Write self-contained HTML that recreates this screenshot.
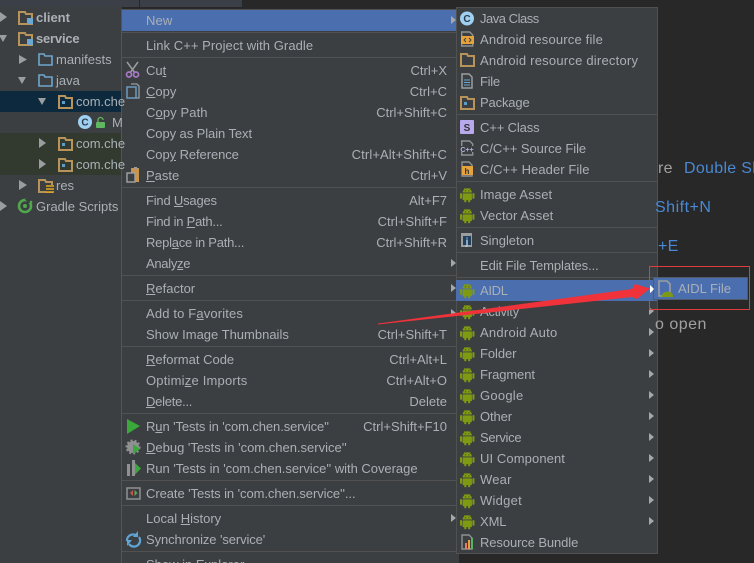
<!DOCTYPE html>
<html><head><meta charset="utf-8"><style>
html,body{margin:0;padding:0;background:#2a2a2a}
#p{position:relative;width:754px;height:563px;overflow:hidden;background:#282828;font-family:"Liberation Sans",sans-serif;font-size:13px;letter-spacing:0;color:#a9b0b6}
#p div{position:absolute;white-space:nowrap;line-height:20px;height:20px;margin-top:1px}
svg{position:absolute;left:0;top:0}
.k{text-align:right;right:307px}
.m{left:146px}.s{left:480px}
.e{font-size:16px;letter-spacing:.3px;color:#4a88d4;line-height:22px!important;height:22px!important}
b{font-weight:bold;color:#aab0b6}
</style></head><body><div id="p">
<svg width="754" height="563" viewBox="0 0 754 563">
<defs>
<g id="a" transform="scale(.85)"><path d="M3 6.500a5.500 5 0 0 1 11 0z" fill="#7e9a12"/><path d="M5 1.500l1 2M12 1.500l-1 2" stroke="#7e9a12"/><rect x="3" y="7.500" width="11" height="8" rx="1" fill="#7e9a12"/><rect x="0" y="7" width="2.400" height="7" rx="1.200" fill="#7e9a12"/><rect x="14.600" y="7" width="2.400" height="7" rx="1.200" fill="#7e9a12"/><rect x="5" y="14" width="2.500" height="4" rx="1" fill="#7e9a12"/><rect x="9.500" y="14" width="2.500" height="4" rx="1" fill="#7e9a12"/><rect x="6" y="4" width="1" height="1" fill="#333"/><rect x="10" y="4" width="1" height="1" fill="#333"/></g>
<g id="r"><path d="M0 0l5 4-5 4z" fill="#a4a8ab"/></g>
<g id="f"><path d="M1 3V1h6l1 2h6v10H1z" fill="none" stroke="#b8935a" stroke-width="2"/></g>
<g id="pk"><use href="#f"/><rect x="4" y="6" width="3" height="3" fill="#5d9ec9"/></g>
<g id="bf"><path d="M1 3V1h5l1 2h7v9H1z" fill="none" stroke="#6ea6cd" stroke-width="1.600"/></g>
<g id="c"><circle cx="7" cy="7" r="7" fill="#9fd0f0"/><text x="7" y="10.500" font-family="Liberation Sans" font-size="10" font-weight="bold" text-anchor="middle" fill="#2a3a4a">C</text></g>
</defs>
<rect width="754" height="8" fill="#282828"/>
<rect width="139" height="7" fill="#3b4048"/>
<rect x="140" width="102" height="7" fill="#3b4048"/>
<rect y="7" width="122" height="556" fill="#3c3f41"/>
<rect y="91" width="122" height="21" fill="#0d293e"/>
<rect y="133" width="122" height="42" fill="#323a30"/>
<rect x="121" y="9" width="338" height="560" fill="#3c3f41"/>
<rect x="121" y="9" width="338" height="1" fill="#515151"/>
<rect x="121" y="9" width="1" height="554" fill="#555"/>
<rect x="122" y="10" width="334" height="21" fill="#4b6eaf"/>
<g fill="#515151">
<rect x="122" y="32" width="336" height="1"/><rect x="122" y="57" width="336" height="1"/><rect x="122" y="187" width="336" height="1"/><rect x="122" y="275" width="336" height="1"/><rect x="122" y="300" width="336" height="1"/><rect x="122" y="346" width="336" height="1"/><rect x="122" y="413" width="336" height="1"/><rect x="122" y="480" width="336" height="1"/><rect x="122" y="505" width="336" height="1"/><rect x="122" y="551" width="336" height="1"/>
</g>
<g fill="#9b9ea0">
<path d="M0 12l7 5-7 5zM0 201l7 5-7 5z"/><path d="M-1 35h8l-4 7zM19 55l8 4.500-8 4.500zM18 77h8l-4 7zM38 98h8l-4 7zM39 138l7 5-7 5zM39 159l7 5-7 5zM19 180l8 5-8 5z"/>
</g>
<g transform="translate(18,11)"><use href="#f"/><rect x="9" y="7" width="6" height="6" fill="#6aa7d2"/></g>
<g transform="translate(18,32)"><use href="#f"/><rect x="9" y="7" width="6" height="6" fill="#6aa7d2"/></g>
<use href="#bf" x="38" y="53"/><use href="#bf" x="38" y="74"/>
<use href="#pk" x="58" y="95"/><use href="#pk" x="58" y="137"/><use href="#pk" x="58" y="158"/>
<use href="#c" x="78" y="115"/>
<rect x="96" y="122" width="9" height="6" rx="1" fill="#5fb760"/><path d="M98 122v-2a2.500 2.500 0 0 1 5 0" fill="none" stroke="#5fb760" stroke-width="1.300"/>
<g transform="translate(38,179)"><use href="#f"/><rect x="8" y="6" width="7" height="7" fill="#3c3f41"/><path d="M8 7h8M8 10h8M8 13h8" stroke="#e3a91e" stroke-width="1.500"/></g>
<circle cx="25" cy="206" r="6" fill="none" stroke="#4fa94c" stroke-width="2.600"/><circle cx="25" cy="206" r="2" fill="#4fa94c"/><path d="M25 199h7v4h-4z" fill="#3c3f41"/><circle cx="31" cy="202" r="1.300" fill="#4fa94c"/>
<path d="M127 62l8 11M138 62l-8 11" stroke="#9a9ea1" stroke-width="1.500"/><circle cx="129" cy="74.500" r="2.500" fill="none" stroke="#a679c4" stroke-width="1.700"/><circle cx="136" cy="74.500" r="2.500" fill="none" stroke="#a679c4" stroke-width="1.700"/>
<path d="M131 84h6l2 2v12h-3" fill="none" stroke="#9a9ea1" stroke-width="1.300"/><rect x="127" y="87" width="9" height="11" fill="#3c3f41" stroke="#6a9cc0" stroke-width="1.500"/>
<rect x="131" y="168" width="8" height="14" fill="#c8944e"/><rect x="134" y="167" width="3" height="2" fill="#9a9ea1"/><rect x="127" y="173" width="8" height="9" fill="#3c3f41" stroke="#9a9ea1" stroke-width="1.500"/>
<path d="M127 419l13 7-13 8z" fill="#3aa83b"/>
<circle cx="133" cy="447" r="6" fill="#8e9092"/><circle cx="133" cy="447" r="6.500" fill="none" stroke="#8e9092" stroke-dasharray="2 2" stroke-width="2"/><path d="M133 444l7 5-7 5z" fill="#3aa83b"/>
<path d="M127 464h3v12h-3zM132 460h3v16h-3z" fill="#8e9092"/><path d="M135 463l6 5.500-6 6z" fill="#3aa83b"/>
<rect x="127" y="488" width="13" height="11" fill="none" stroke="#8e9092" stroke-width="1.500"/><path d="M133 490l-3 3 3 3z" fill="#c75450"/><path d="M134.500 490l3 3-3 3z" fill="#5aa85a"/>
<path d="M127 541a6 6 0 0 1 10-5M139 537a6 6 0 0 1-10 7" fill="none" stroke="#5fa5d8" stroke-width="2.200"/><path d="M138 531v6h-5zM127 546v-6h5z" fill="#5fa5d8"/>
<use href="#r" x="451" y="16"/><use href="#r" x="451" y="259"/><use href="#r" x="451" y="284"/><use href="#r" x="451" y="309"/><use href="#r" x="451" y="514"/>
<rect x="456.500" y="7.500" width="201" height="546" fill="#3c3f41" stroke="#515151" stroke-width="1"/>
<rect x="456" y="280" width="201" height="21" fill="#4b6eaf"/>
<g fill="#515151"><rect x="457" y="114" width="200" height="1"/><rect x="457" y="181" width="200" height="1"/><rect x="457" y="227" width="200" height="1"/><rect x="457" y="252" width="200" height="1"/><rect x="457" y="277" width="200" height="1"/></g>
<use href="#c" x="460" y="11.500"/>
<path d="M461.700 32h8l3 3v11h-11z" fill="none" stroke="#8e9092" stroke-width="1.400"/><rect x="461" y="36" width="13" height="8" fill="#e6a23c"/><path d="M466 38l-2 2 2 2M469 38l2 2-2 2" fill="none" stroke="#3c3f41"/>
<use href="#f" x="460" y="53"/>
<path d="M462 74h7l3 3v11h-10z" fill="none" stroke="#9a9ea1" stroke-width="1.500"/><path d="M464 80h6M464 82.500h6M464 85h6" stroke="#6aa7d2"/>
<use href="#pk" x="460" y="96"/>
<rect x="460" y="120" width="14" height="14" rx="1" fill="#b8a8ec"/><text x="467" y="131" font-family="Liberation Sans" font-size="10" font-weight="bold" text-anchor="middle" fill="#333">S</text>
<path d="M461.700 141h8l3 3v11h-11z" fill="none" stroke="#8e9092" stroke-width="1.400"/><rect x="460" y="146" width="14" height="6" fill="#3c3f41"/><text x="467" y="152" font-family="Liberation Sans" font-size="7" font-weight="bold" text-anchor="middle" fill="#b0b4e0">C++</text>
<path d="M462 162h7l3 3v11h-10z" fill="none" stroke="#8e9092" stroke-width="1.400"/><rect x="462" y="166" width="11" height="9" fill="#e6a23c"/><text x="467" y="174" font-family="Liberation Sans" font-size="8" font-weight="bold" text-anchor="middle" fill="#333">h</text>
<use href="#a" x="460" y="187"/><use href="#a" x="460" y="208"/>
<rect x="461" y="233" width="11" height="14" fill="#9a9ea1"/><rect x="463" y="236" width="8" height="9" fill="#20405e"/><text x="467" y="245" font-family="Liberation Sans" font-size="10" font-weight="bold" text-anchor="middle" fill="#bcd">j</text>
<g><use href="#a" x="460" y="283"/><use href="#a" x="460" y="304"/><use href="#a" x="460" y="325"/><use href="#a" x="460" y="346"/><use href="#a" x="460" y="367"/><use href="#a" x="460" y="388"/><use href="#a" x="460" y="409"/><use href="#a" x="460" y="430"/><use href="#a" x="460" y="451"/><use href="#a" x="460" y="472"/><use href="#a" x="460" y="493"/><use href="#a" x="460" y="514"/></g>
<path d="M462 535h7l3 3v11h-10z" fill="none" stroke="#8e9092" stroke-width="1.400"/><rect x="465" y="543" width="2" height="6" fill="#e87a6a"/><rect x="468" y="540" width="2" height="9" fill="#e6a23c"/><rect x="471" y="538" width="2" height="11" fill="#59b360"/>
<use href="#r" x="649" y="286"/><use href="#r" x="649" y="307"/><use href="#r" x="649" y="328"/><use href="#r" x="649" y="349"/><use href="#r" x="649" y="370"/><use href="#r" x="649" y="391"/><use href="#r" x="649" y="412"/><use href="#r" x="649" y="433"/><use href="#r" x="649" y="454"/><use href="#r" x="649" y="475"/><use href="#r" x="649" y="496"/><use href="#r" x="649" y="517"/>
<rect x="653.500" y="277.500" width="94" height="22" fill="#4b6eaf" stroke="#515a68"/>
<path d="M659 281h8l3 3v12h-11z" fill="none" stroke="#9a9ea1" stroke-width="1.600"/><path d="M662 296a5 4 0 0 1 11 0v1h-11z" fill="#7e9a12"/>
<rect x="649.500" y="266.500" width="100" height="43" fill="none" stroke="#e03c3c"/>
</svg>
<div style="left:36px;top:7px"><b>client</b></div>
<div style="left:36px;top:28px"><b style="letter-spacing:-.2px">service</b></div>
<div style="left:56px;top:49px">manifests</div>
<div style="left:56px;top:70px">java</div>
<div style="left:76px;top:91px">com.che</div>
<div style="left:112px;top:112px">M</div>
<div style="left:76px;top:133px">com.che</div>
<div style="left:76px;top:154px">com.che</div>
<div style="left:56px;top:175px">res</div>
<div style="left:36px;top:196px">Gradle Scripts</div>
<div class="e" style="left:658px;top:157px;color:#a0a0a0">re</div>
<div class="e" style="left:684px;top:157px">Double Shift</div>
<div class="e" style="left:655px;top:196px;letter-spacing:.5px">Shift+N</div>
<div class="e" style="left:658px;top:235px">+E</div>
<div class="e" style="left:655px;top:313px;color:#a0a0a0;letter-spacing:.5px">o open</div>
<div class="m" style="top:10px;letter-spacing:.1px">New</div>
<div class="m" style="top:35px;letter-spacing:.06px">Link C++ Project with Gradle</div>
<div class="m" style="top:60px">Cu<u>t</u></div><div class="k" style="top:60px">Ctrl+X</div>
<div class="m" style="top:81px"><u>C</u>opy</div><div class="k" style="top:81px">Ctrl+C</div>
<div class="m" style="top:102px;letter-spacing:.1px">C<u>o</u>py Path</div><div class="k" style="top:102px">Ctrl+Shift+C</div>
<div class="m" style="top:123px;letter-spacing:-.08px">Copy as Plain Text</div>
<div class="m" style="top:144px;letter-spacing:-.08px">Cop<u>y</u> Reference</div><div class="k" style="top:144px;letter-spacing:.11px">Ctrl+Alt+Shift+C</div>
<div class="m" style="top:165px"><u>P</u>aste</div><div class="k" style="top:165px">Ctrl+V</div>
<div class="m" style="top:190px;letter-spacing:-.2px">Find <u>U</u>sages</div><div class="k" style="top:190px">Alt+F7</div>
<div class="m" style="top:211px;letter-spacing:-.25px">Find in <u>P</u>ath...</div><div class="k" style="top:211px">Ctrl+Shift+F</div>
<div class="m" style="top:232px;letter-spacing:-.25px">Repl<u>a</u>ce in Path...</div><div class="k" style="top:232px">Ctrl+Shift+R</div>
<div class="m" style="top:253px;letter-spacing:-.3px">Analy<u>z</u>e</div>
<div class="m" style="top:278px"><u>R</u>efactor</div>
<div class="m" style="top:303px;letter-spacing:.15px">Add to F<u>a</u>vorites</div>
<div class="m" style="top:324px">Show Image Thumbnails</div><div class="k" style="top:324px">Ctrl+Shift+T</div>
<div class="m" style="top:349px"><u>R</u>eformat Code</div><div class="k" style="top:349px">Ctrl+Alt+L</div>
<div class="m" style="top:370px;letter-spacing:.2px">Optimi<u>z</u>e Imports</div><div class="k" style="top:370px">Ctrl+Alt+O</div>
<div class="m" style="top:391px;letter-spacing:-.25px"><u>D</u>elete...</div><div class="k" style="top:391px">Delete</div>
<div class="m" style="top:416px;letter-spacing:-.1px">R<u>u</u>n 'Tests in 'com.chen.service''</div><div class="k" style="top:416px">Ctrl+Shift+F10</div>
<div class="m" style="top:437px"><u>D</u>ebug 'Tests in 'com.chen.service''</div>
<div class="m" style="top:458px;letter-spacing:-.03px">Run 'Tests in 'com.chen.service'' with Coverage</div>
<div class="m" style="top:483px;letter-spacing:-.07px">Create 'Tests in 'com.chen.service''...</div>
<div class="m" style="top:508px"><span>Local <u>H</u>istory</span></div>
<div class="m" style="top:529px;letter-spacing:-.1px">Synchronize 'service'</div>
<div class="m" style="top:554px">Show in Explorer</div>
<div class="s" style="top:8px;letter-spacing:-.48px">Java Class</div>
<div class="s" style="top:29px;letter-spacing:.18px">Android resource file</div>
<div class="s" style="top:50px;letter-spacing:.22px">Android resource directory</div>
<div class="s" style="top:71px;letter-spacing:-.3px">File</div>
<div class="s" style="top:92px;letter-spacing:-.15px">Package</div>
<div class="s" style="top:117px;letter-spacing:-.13px">C++ Class</div>
<div class="s" style="top:138px;letter-spacing:-.05px">C/C++ Source File</div>
<div class="s" style="top:159px;letter-spacing:.07px">C/C++ Header File</div>
<div class="s" style="top:184px;letter-spacing:.06px">Image Asset</div>
<div class="s" style="top:205px;letter-spacing:.09px">Vector Asset</div>
<div class="s" style="top:230px;letter-spacing:-.02px">Singleton</div>
<div class="s" style="top:255px;letter-spacing:-.08px">Edit File Templates...</div>
<div class="s" style="top:280px;letter-spacing:-.3px">AIDL</div>
<div class="s" style="top:301px;letter-spacing:-.3px">Activity</div>
<div class="s" style="top:322px;letter-spacing:.25px">Android Auto</div>
<div class="s" style="top:343px;letter-spacing:-.08px">Folder</div>
<div class="s" style="top:364px;letter-spacing:-.1px">Fragment</div>
<div class="s" style="top:385px;letter-spacing:.25px">Google</div>
<div class="s" style="top:406px;letter-spacing:-.1px">Other</div>
<div class="s" style="top:427px;letter-spacing:-.3px">Service</div>
<div class="s" style="top:448px;letter-spacing:.1px">UI Component</div>
<div class="s" style="top:469px;letter-spacing:.2px">Wear</div>
<div class="s" style="top:490px;letter-spacing:.25px">Widget</div>
<div class="s" style="top:511px;letter-spacing:-.1px">XML</div>
<div class="s" style="top:532px;letter-spacing:-.1px">Resource Bundle</div>
<div style="left:678px;top:278px">AIDL File</div>
<svg width="754" height="563" viewBox="0 0 754 563">
<path d="M378 323.500L632 289L635 284L650 288.500L637 299L632 297L378 324.500Z" fill="#f0323a"/>
<path d="M650 285l4 4-4 4z" fill="#fff"/>
</svg>
</div></body></html>
